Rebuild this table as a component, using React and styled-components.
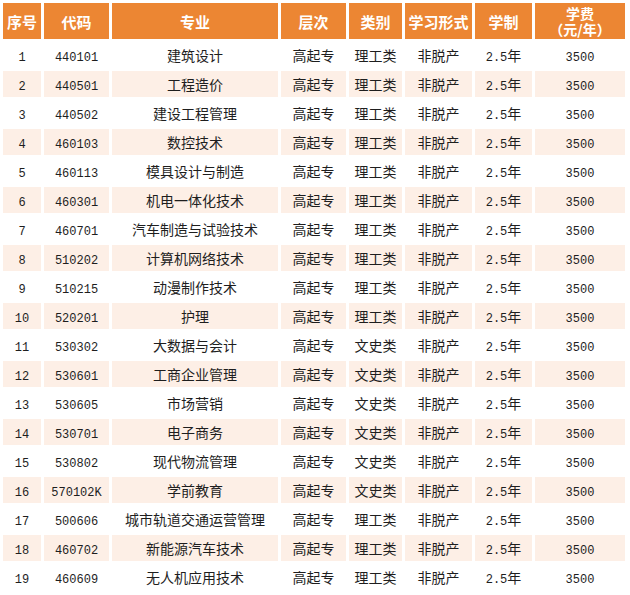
import styled, { createGlobalStyle } from "styled-components";

/* 招生专业 표 */

const GlobalStyle = createGlobalStyle`
  body {
    margin: 0;
    background: #ffffff;
    font-family: "Noto Sans CJK SC", "Liberation Sans", sans-serif;
  }
`;

const COLUMNS = [
  { key: "no", title: "序号", width: 38 },
  { key: "code", title: "代码", width: 65 },
  { key: "major", title: "专业", width: 166 },
  { key: "level", title: "层次", width: 65 },
  { key: "type", title: "类别", width: 53 },
  { key: "form", title: "学习形式", width: 67 },
  { key: "years", title: "学制", width: 57 },
  { key: "fee", title: "学费", sub: "（元/年）", width: 90 },
];

const MAJORS = [
  ["440101", "建筑设计", "理工类"],
  ["440501", "工程造价", "理工类"],
  ["440502", "建设工程管理", "理工类"],
  ["460103", "数控技术", "理工类"],
  ["460113", "模具设计与制造", "理工类"],
  ["460301", "机电一体化技术", "理工类"],
  ["460701", "汽车制造与试验技术", "理工类"],
  ["510202", "计算机网络技术", "理工类"],
  ["510215", "动漫制作技术", "理工类"],
  ["520201", "护理", "理工类"],
  ["530302", "大数据与会计", "文史类"],
  ["530601", "工商企业管理", "文史类"],
  ["530605", "市场营销", "文史类"],
  ["530701", "电子商务", "文史类"],
  ["530802", "现代物流管理", "文史类"],
  ["570102K", "学前教育", "文史类"],
  ["500606", "城市轨道交通运营管理", "理工类"],
  ["460702", "新能源汽车技术", "理工类"],
  ["460609", "无人机应用技术", "理工类"],
];

function App() {
  return (
    <>
      <GlobalStyle />
      <Table>
        <colgroup>
          {COLUMNS.map((c) => (
            <col key={c.key} style={{ width: c.width }} />
          ))}
        </colgroup>
        <thead>
          <tr>
            {COLUMNS.map((c) => (
              <HeadCell key={c.key}>
                {c.sub ? (
                  <>
                    <HeadLine>{c.title}</HeadLine>
                    <HeadLine>{c.sub}</HeadLine>
                  </>
                ) : (
                  c.title
                )}
              </HeadCell>
            ))}
          </tr>
        </thead>
        <tbody>
          {MAJORS.map(([code, major, type], i) => (
            <Row key={code} $shaded={i % 2 === 1}>
              <Cell><Num>{i + 1}</Num></Cell>
              <Cell><Num>{code}</Num></Cell>
              <Cell>{major}</Cell>
              <Cell>高起专</Cell>
              <Cell>{type}</Cell>
              <Cell>非脱产</Cell>
              <Cell><Num>2.5</Num>年</Cell>
              <Cell><Num>3500</Num></Cell>
            </Row>
          ))}
        </tbody>
      </Table>
    </>
  );
}

export default App;

/* 스타일 */

const Table = styled.table`
  table-layout: fixed;
  border-collapse: separate;
  border-spacing: 3px;
  width: 628px;
`;

const HeadCell = styled.th`
  height: 36px;
  padding: 0;
  background: #ec8633;
  color: #ffffff;
  font-size: 15px;
  font-weight: 700;
  text-align: center;
  vertical-align: middle;
  white-space: nowrap;
`;

const HeadLine = styled.div`
  font-size: 14px;
  line-height: 16px;
`;

const Row = styled.tr`
  td {
    background: ${(p) => (p.$shaded ? "#fdefe6" : "#ffffff")};
  }
`;

const Cell = styled.td`
  height: 26px;
  padding: 0;
  color: #1e1e1e;
  font-size: 14px;
  text-align: center;
  vertical-align: middle;
  white-space: nowrap;
`;

const Num = styled.span`
  font-family: "Liberation Mono", "DejaVu Sans Mono", monospace;
  font-size: 12px;
`;
